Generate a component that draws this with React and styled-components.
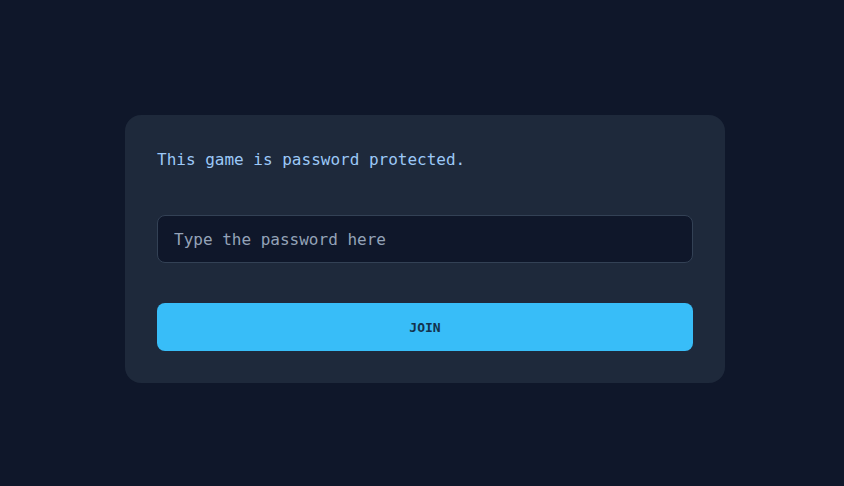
import React from 'react';
import styled, { createGlobalStyle } from 'styled-components';

const GlobalStyle = createGlobalStyle`
  html, body {
    margin: 0;
    padding: 0;
    background-color: #0f172a;
  }
  * {
    box-sizing: border-box;
  }
`;

const Page = styled.div`
  min-height: 100vh;
  display: flex;
  justify-content: center;
  align-items: flex-start;
  padding: 115px 0 0 6px;
  font-family: 'DejaVu Sans Mono', monospace;
`;

const Card = styled.form`
  width: 600px;
  background-color: #1e293b;
  border-radius: 16px;
  padding: 33px 32px 32px;
  display: flex;
  flex-direction: column;
`;

const Message = styled.p`
  margin: 0 0 43px;
  font-size: 16px;
  line-height: 24px;
  color: #9cc8f7;
`;

const PasswordInput = styled.input`
  height: 48px;
  width: 100%;
  padding: 0 16px;
  margin-bottom: 40px;
  background-color: #0f172a;
  border: 1px solid #334155;
  border-radius: 8px;
  color: #e2e8f0;
  font-family: inherit;
  font-size: 16px;
  outline: none;

  &::placeholder {
    color: #94a3b8;
  }
`;

const JoinButton = styled.button`
  height: 48px;
  width: 100%;
  border: none;
  border-radius: 8px;
  background-color: #38bdf8;
  color: #13324d;
  font-family: inherit;
  font-size: 13px;
  font-weight: bold;
  cursor: pointer;
`;

export default function App() {
  return (
    <>
      <GlobalStyle />
      <Page>
        <Card onSubmit={e => e.preventDefault()}>
          <Message>This game is password protected.</Message>
          <PasswordInput type="password" placeholder="Type the password here" />
          <JoinButton type="submit">JOIN</JoinButton>
        </Card>
      </Page>
    </>
  );
}
